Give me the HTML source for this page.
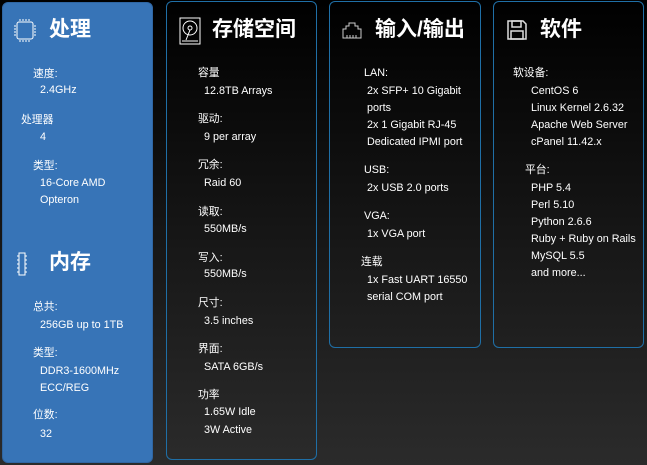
<!DOCTYPE html>
<html><head><meta charset="utf-8"><style>
html,body{margin:0;padding:0}
body{width:647px;height:465px;overflow:hidden;position:relative;background:linear-gradient(#000 0%,#161616 50%,#2b2b2b 100%);font-family:"Liberation Sans","Noto Sans CJK SC",sans-serif;color:#fff;font-size:10.8px}
.p{position:absolute;border-radius:6px;box-sizing:border-box}
.dark{border:1px solid #1f6fa6;background:transparent}
.blue{background:#3774b7;border:1px solid #2f66a3}
.t{position:absolute;line-height:17px;white-space:nowrap}
.h{position:absolute;font-size:21px;font-weight:bold;line-height:24px;white-space:nowrap}
svg{position:absolute}
</style></head><body>
<div class="p blue" style="left:2px;top:2px;width:151px;height:461px"></div>
<div class="p dark" style="left:166px;top:1px;width:151px;height:459px"></div>
<div class="p dark" style="left:329px;top:1px;width:152px;height:347px"></div>
<div class="p dark" style="left:493px;top:1px;width:151px;height:347px"></div>

<svg style="left:13px;top:17px" width="24" height="28" viewBox="0 0 24 28" fill="none" stroke="#fff" stroke-width="1"><rect x="4" y="5" width="16" height="17" rx="2"/><path d="M7 2v2M10 2v2M13 2v2M16 2v2M7 23v2M10 23v2M13 23v2M16 23v2M1 9h2M1 12h2M1 15h2M1 18h2M21 9h2M21 12h2M21 15h2M21 18h2"/></svg>
<div class="h" style="left:49px;top:18px">处理</div>
<div class="t" style="left:33px;top:66px">速度:</div>
<div class="t" style="left:40px;top:82px">2.4GHz</div>
<div class="t" style="left:21px;top:112px">处理器</div>
<div class="t" style="left:40px;top:129px">4</div>
<div class="t" style="left:33px;top:158px">类型:</div>
<div class="t" style="left:40px;top:175px">16-Core AMD</div>
<div class="t" style="left:40px;top:192px">Opteron</div>
<svg style="left:16px;top:252px" width="12" height="24" viewBox="0 0 12 24" fill="none" stroke="#fff" stroke-width="1"><rect x="3" y="1" width="6" height="22"/><path d="M1 4h2M1 8h2M1 12h2M1 16h2M1 20h2M9 4h2M9 8h2M9 12h2M9 16h2M9 20h2"/></svg>
<div class="h" style="left:49px;top:251px">内存</div>
<div class="t" style="left:33px;top:299px">总共:</div>
<div class="t" style="left:40px;top:317px">256GB up to 1TB</div>
<div class="t" style="left:33px;top:345px">类型:</div>
<div class="t" style="left:40px;top:363px">DDR3-1600MHz</div>
<div class="t" style="left:40px;top:380px">ECC/REG</div>
<div class="t" style="left:33px;top:407px">位数:</div>
<div class="t" style="left:40px;top:426px">32</div>

<svg style="left:179px;top:17px" width="22" height="28" viewBox="0 0 22 28" fill="none" stroke="#fff" stroke-width="1"><rect x="1" y="1" width="20" height="26"/><circle cx="11" cy="11" r="7"/><circle cx="11" cy="11" r="2"/><path d="M11 13l-4 10M3 24h16"/></svg>
<div class="h" style="left:212px;top:18px">存储空间</div>
<div class="t" style="left:198px;top:65px">容量</div>
<div class="t" style="left:204px;top:83px">12.8TB Arrays</div>
<div class="t" style="left:198px;top:111px">驱动:</div>
<div class="t" style="left:204px;top:129px">9 per array</div>
<div class="t" style="left:198px;top:157px">冗余:</div>
<div class="t" style="left:204px;top:175px">Raid 60</div>
<div class="t" style="left:198px;top:204px">读取:</div>
<div class="t" style="left:204px;top:221px">550MB/s</div>
<div class="t" style="left:198px;top:250px">写入:</div>
<div class="t" style="left:204px;top:266px">550MB/s</div>
<div class="t" style="left:198px;top:295px">尺寸:</div>
<div class="t" style="left:204px;top:313px">3.5 inches</div>
<div class="t" style="left:198px;top:341px">界面:</div>
<div class="t" style="left:204px;top:359px">SATA 6GB/s</div>
<div class="t" style="left:198px;top:387px">功率</div>
<div class="t" style="left:204px;top:404px">1.65W Idle</div>
<div class="t" style="left:204px;top:422px">3W Active</div>

<svg style="left:342px;top:21px" width="20" height="18" viewBox="0 0 20 18" fill="none" stroke="#ccc" stroke-width="1"><path d="M1 17V8h3V5h3V2h6v3h3v3h3v9zM5 17v-3M8 17v-3M11 17v-3M14 17v-3"/></svg>
<div class="h" style="left:375px;top:18px">输入/输出</div>
<div class="t" style="left:364px;top:65px">LAN:</div>
<div class="t" style="left:367px;top:83px">2x SFP+ 10 Gigabit</div>
<div class="t" style="left:367px;top:100px">ports</div>
<div class="t" style="left:367px;top:117px">2x 1 Gigabit RJ-45</div>
<div class="t" style="left:367px;top:134px">Dedicated IPMI port</div>
<div class="t" style="left:364px;top:162px">USB:</div>
<div class="t" style="left:367px;top:180px">2x USB 2.0 ports</div>
<div class="t" style="left:364px;top:208px">VGA:</div>
<div class="t" style="left:367px;top:226px">1x VGA port</div>
<div class="t" style="left:361px;top:254px">连载</div>
<div class="t" style="left:367px;top:272px">1x Fast UART 16550</div>
<div class="t" style="left:367px;top:289px">serial COM port</div>

<svg style="left:507px;top:20px" width="20" height="20" viewBox="0 0 20 20" fill="none" stroke="#ddd" stroke-width="1.5"><path d="M1 1h15l3 3v15H1z"/><rect x="5" y="1" width="9" height="6"/><rect x="4" y="11" width="12" height="8"/></svg>
<div class="h" style="left:540px;top:18px">软件</div>
<div class="t" style="left:513px;top:65px">软设备:</div>
<div class="t" style="left:531px;top:83px">CentOS 6</div>
<div class="t" style="left:531px;top:100px">Linux Kernel 2.6.32</div>
<div class="t" style="left:531px;top:117px">Apache Web Server</div>
<div class="t" style="left:531px;top:134px">cPanel 11.42.x</div>
<div class="t" style="left:525px;top:162px">平台:</div>
<div class="t" style="left:531px;top:180px">PHP 5.4</div>
<div class="t" style="left:531px;top:197px">Perl 5.10</div>
<div class="t" style="left:531px;top:214px">Python 2.6.6</div>
<div class="t" style="left:531px;top:231px">Ruby + Ruby on Rails</div>
<div class="t" style="left:531px;top:248px">MySQL 5.5</div>
<div class="t" style="left:531px;top:265px">and more...</div>
</body></html>
